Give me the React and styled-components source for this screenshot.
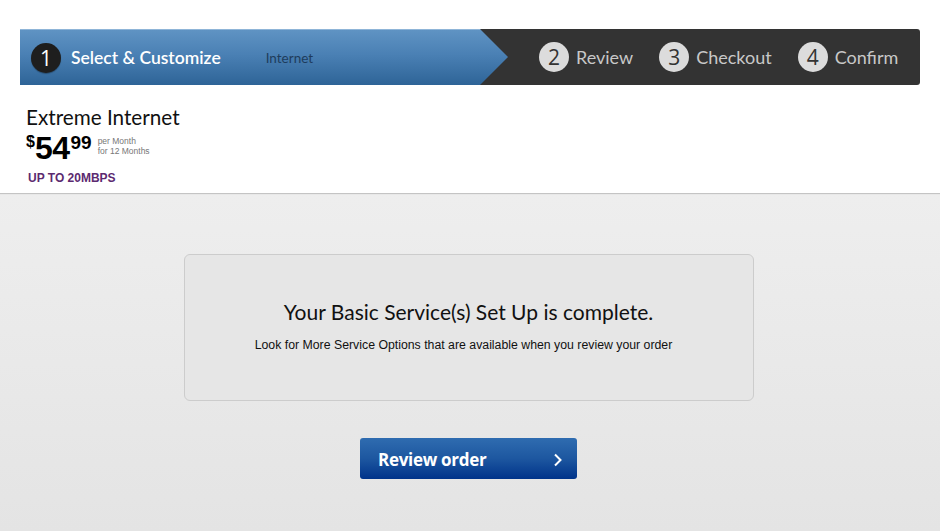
import React from "react";
import styled, { createGlobalStyle } from "styled-components";

const GlobalStyle = createGlobalStyle`
  html, body {
    margin: 0;
    padding: 0;
    background: #fff;
  }
  body {
    font-family: Lato, "Open Sans", sans-serif;
    width: 940px;
    height: 531px;
    overflow: hidden;
  }
`;

const Page = styled.div`
  width: 940px;
  height: 531px;
  display: flex;
  flex-direction: column;
`;

const Header = styled.header`
  background: #fff;
  padding: 29px 20px 0;
  height: 194px;
  box-sizing: border-box;
  border-bottom: 1px solid #c4c4c4;
`;

const StepBar = styled.nav`
  display: flex;
  align-items: center;
  height: 56px;
  background: #333333;
  border-radius: 0 3px 3px 0;
`;

const ActiveStep = styled.div`
  display: flex;
  align-items: center;
  width: 488px;
  height: 100%;
  padding-left: 11px;
  box-sizing: border-box;
  background: linear-gradient(#5f93c3 0%, #4a80b4 45%, #2e6497 100%);
  border-top: 1px solid #8fb5d8;
  clip-path: polygon(0 0, calc(100% - 28px) 0, 100% 50%, calc(100% - 28px) 100%, 0 100%);
`;

const Circle = styled.span`
  width: 30px;
  height: 30px;
  border-radius: 50%;
  display: inline-flex;
  align-items: center;
  justify-content: center;
  font-size: 21px;
  font-family: "Open Sans", sans-serif;
  flex-shrink: 0;
  background: ${(p) => (p.active ? "#1e1e1e" : "#dcdcdc")};
  color: ${(p) => (p.active ? "#fff" : "#333")};
  box-shadow: ${(p) => (p.active ? "0 1px 1px rgba(0,0,0,0.3)" : "none")};
`;

const StepLabel = styled.span`
  margin-left: ${(p) => (p.active ? "10px" : "7px")};
  font-size: ${(p) => (p.active ? "17.5px" : "18px")};
  font-weight: ${(p) => (p.active ? 600 : 400)};
  color: ${(p) => (p.active ? "#fff" : "#c8c8c8")};
  white-space: nowrap;
`;

const SubLabel = styled.span`
  margin-left: 45px;
  font-size: 13.5px;
  color: #1e3c5c;
`;

const Steps = styled.div`
  display: flex;
  align-items: center;
  margin-left: 31px;
  gap: 26px;
`;

const Step = styled.div`
  display: flex;
  align-items: center;
`;

const Product = styled.div`
  padding: 20px 0 0 6px;
`;

const ProductName = styled.h1`
  margin: 0;
  font-size: 20.7px;
  font-weight: 400;
  line-height: 24px;
  color: #111;
`;

const PriceRow = styled.div`
  display: flex;
  align-items: flex-start;
  margin-top: 4px;
  font-family: "Liberation Sans", Arial, sans-serif;
  color: #000;
`;

const Dollar = styled.span`
  font-size: 16px;
  font-weight: 700;
  line-height: 16px;
  margin-top: 1px;
`;

const Whole = styled.span`
  font-size: 32px;
  font-weight: 700;
  line-height: 31px;
  letter-spacing: -0.5px;
`;

const Cents = styled.span`
  font-size: 19px;
  font-weight: 700;
  line-height: 19px;
  margin-left: 1px;
`;

const Terms = styled.div`
  margin-left: 6px;
  margin-top: 3px;
  font-size: 8.5px;
  line-height: 10px;
  color: #777;
`;

const Speed = styled.div`
  margin: 7px 0 0 2px;
  font-family: "Liberation Sans", Arial, sans-serif;
  font-size: 12px;
  font-weight: 700;
  color: #5c2a70;
`;

const Main = styled.main`
  flex: 1;
  background: linear-gradient(#eeeeee, #e4e4e4);
  border-top: 1px solid #e8e8e8;
  display: flex;
  flex-direction: column;
  align-items: center;
  padding: 59px 3px 0 0;
`;

const Notice = styled.section`
  width: 570px;
  height: 147px;
  box-sizing: border-box;
  border: 1px solid #cccccc;
  border-radius: 6px;
  background: #e6e6e6;
  display: flex;
  flex-direction: column;
  align-items: center;
  padding-top: 44px;
`;

const NoticeTitle = styled.h2`
  margin: 0;
  font-size: 21px;
  font-weight: 400;
  color: #111;
  line-height: 25px;
`;

const NoticeText = styled.p`
  margin: 14px 10px 0 0;
  font-family: "Liberation Sans", Arial, sans-serif;
  font-size: 12.3px;
  color: #111;
`;

const ReviewButton = styled.button`
  margin-top: 37px;
  width: 217px;
  height: 41px;
  border: none;
  border-radius: 3px;
  background: linear-gradient(#2f6cb0 0%, #1d57a0 50%, #00338a 100%);
  color: #fff;
  display: flex;
  align-items: center;
  justify-content: space-between;
  padding: 2px 14px 0 18px;
  font-family: "Open Sans", sans-serif;
  font-size: 17px;
  font-weight: 700;
  letter-spacing: -0.3px;
  cursor: pointer;
`;

const steps = [
  { n: 2, label: "Review" },
  { n: 3, label: "Checkout" },
  { n: 4, label: "Confirm" },
];

const App = () => {
  return (
    <Page>
      <GlobalStyle />
      <Header>
        <StepBar>
          <ActiveStep>
            <Circle active>1</Circle>
            <StepLabel active>Select &amp; Customize</StepLabel>
            <SubLabel>Internet</SubLabel>
          </ActiveStep>
          <Steps>
            {steps.map((s) => (
              <Step key={s.n}>
                <Circle>{s.n}</Circle>
                <StepLabel>{s.label}</StepLabel>
              </Step>
            ))}
          </Steps>
        </StepBar>
        <Product>
          <ProductName>Extreme Internet</ProductName>
          <PriceRow>
            <Dollar>$</Dollar>
            <Whole>54</Whole>
            <Cents>99</Cents>
            <Terms>
              per Month
              <br />
              for 12 Months
            </Terms>
          </PriceRow>
          <Speed>UP TO 20MBPS</Speed>
        </Product>
      </Header>
      <Main>
        <Notice>
          <NoticeTitle>Your Basic Service(s) Set Up is complete.</NoticeTitle>
          <NoticeText>
            Look for More Service Options that are available when you review your order
          </NoticeText>
        </Notice>
        <ReviewButton>
          Review order
          <svg width="10" height="14" viewBox="0 0 10 14">
            <path d="M2 1.5 L7.5 7 L2 12.5" fill="none" stroke="#fff" strokeWidth="2" />
          </svg>
        </ReviewButton>
      </Main>
    </Page>
  );
};

export default App;
